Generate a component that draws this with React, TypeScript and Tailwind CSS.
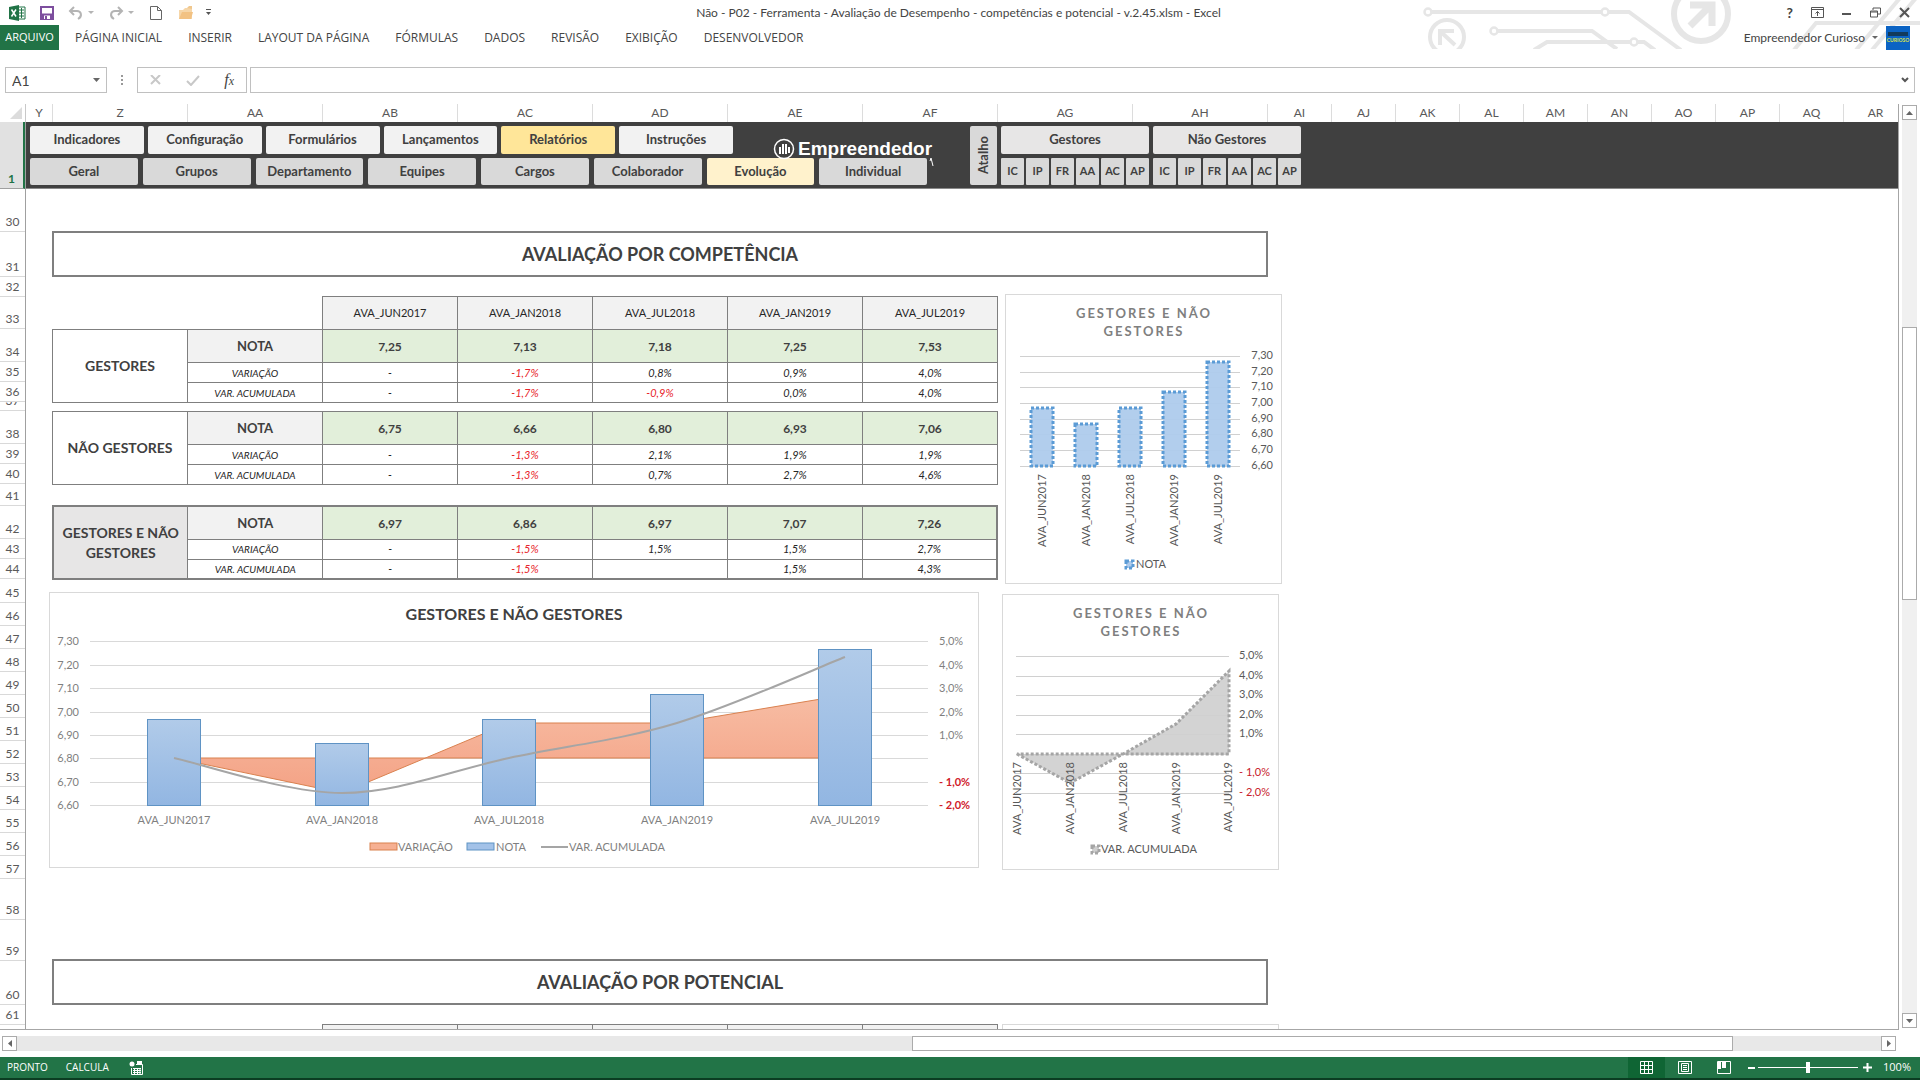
import React from "react";

const periods = ["AVA_JUN2017", "AVA_JAN2018", "AVA_JUL2018", "AVA_JAN2019", "AVA_JUL2019"];

const columns: [string, string][] = [
  ["Y", "w-[27px]"], ["Z", "w-[135px]"], ["AA", "w-[135px]"], ["AB", "w-[135px]"], ["AC", "w-[135px]"],
  ["AD", "w-[135px]"], ["AE", "w-[135px]"], ["AF", "w-[135px]"], ["AG", "w-[135px]"], ["AH", "w-[135px]"],
  ["AI", "w-[64px]"], ["AJ", "w-[64px]"], ["AK", "w-[64px]"], ["AL", "w-[64px]"], ["AM", "w-[64px]"],
  ["AN", "w-[64px]"], ["AO", "w-[64px]"], ["AP", "w-[64px]"], ["AQ", "w-[64px]"], ["AR", "w-[64px]"],
];

const rowHeaders: [number, string][] = [
  [30, "h-[43px]"], [31, "h-[45px]"], [32, "h-5"], [33, "h-8"], [34, "h-[33px]"], [35, "h-5"], [36, "h-5"],
  [37, "h-[9px]"], [38, "h-[33px]"], [39, "h-5"], [40, "h-5"], [41, "h-[22px]"], [42, "h-[33px]"], [43, "h-5"],
  [44, "h-5"], [45, "h-6"], [46, "h-[23px]"], [47, "h-[23px]"], [48, "h-[23px]"], [49, "h-[23px]"],
  [50, "h-[23px]"], [51, "h-[23px]"], [52, "h-[23px]"], [53, "h-[23px]"], [54, "h-[23px]"], [55, "h-[23px]"],
  [56, "h-[23px]"], [57, "h-[23px]"], [58, "h-[41px]"], [59, "h-[41px]"], [60, "h-11"], [61, "h-5"],
];

const tabs = ["PÁGINA INICIAL", "INSERIR", "LAYOUT DA PÁGINA", "FÓRMULAS", "DADOS", "REVISÃO", "EXIBIÇÃO", "DESENVOLVEDOR"];

function Circuit() {
  return (
    <svg className="pointer-events-none absolute top-0 right-0" width="500" height="49" viewBox="1420 0 500 49" fill="none" stroke="#e6e6e6" strokeWidth="4" aria-hidden="true">
      <circle cx="1428" cy="12" r="3.5" strokeWidth="2.5" />
      <path d="M1432 12H1601M1609 12H1629L1681 50" />
      <circle cx="1605" cy="12" r="3.5" strokeWidth="2.5" />
      <circle cx="1494" cy="31" r="3.5" strokeWidth="2.5" />
      <path d="M1498 31H1592L1617 49M1534 50L1547 42H1630M1638 42H1644L1655 50" />
      <circle cx="1634" cy="42" r="3.5" strokeWidth="2.5" />
      <circle cx="1447" cy="37" r="17" />
      <path d="M1440 45V31H1454M1441 32L1455 45" />
      <circle cx="1701" cy="14" r="27" strokeWidth="6" />
      <path d="M1690 26L1711 5M1690 5H1712V26" strokeWidth="7" />
      <path d="M1794 50L1816 23H1920M1856 50L1900 -2M1872 50L1916 -2" />
    </svg>
  );
}

function TitleBar() {
  return (
    <header className="grid h-[25px] shrink-0 grid-cols-[1fr_auto_1fr] items-center text-[12px] text-[#444]">
      <div className="flex items-center pl-[9px]">
        <svg width="17" height="16" viewBox="0 0 17 16" aria-hidden="true">
          <path d="M9 2h7v12H9z" fill="#fff" stroke="#217346" />
          <path d="M10 5h5M10 8h5M10 11h5M12.500 3v10" stroke="#217346" />
          <path d="M0 2L10 0v16L0 14z" fill="#217346" />
          <path d="M2.500 4.500L7 11.500M7 4.500L2.500 11.500" stroke="#fff" strokeWidth="1.500" />
        </svg>
        <button aria-label="Salvar" className="ml-[14px]">
          <svg width="14" height="14" viewBox="0 0 14 14"><path d="M1 1h12v12H1z" fill="#fff" stroke="#7d4e9e" strokeWidth="2" /><path d="M1 7.500h12V13H1z" fill="#7d4e9e" /><path d="M4 9.500h6V13H4z" fill="#fff" /><path d="M5 10h2v3H5z" fill="#7d4e9e" /></svg>
        </button>
        <button aria-label="Desfazer" className="ml-[14px] flex items-center gap-1">
          <svg width="16" height="14" viewBox="0 0 16 14" fill="none" stroke="#b4b4b4" strokeWidth="2"><path d="M6 1L2 5l4 4M2 5h7c4 0 6 5 1 8" /></svg>
          <svg width="6" height="3"><path d="M0 0h6L3 3z" fill="#b4b4b4" /></svg>
        </button>
        <button aria-label="Refazer" className="ml-[14px] flex items-center gap-1">
          <svg width="16" height="14" viewBox="0 0 16 14" fill="none" stroke="#b4b4b4" strokeWidth="2"><path d="M10 1l4 4-4 4M14 5H7C3 5 1 10 6 13" /></svg>
          <svg width="6" height="3"><path d="M0 0h6L3 3z" fill="#b4b4b4" /></svg>
        </button>
        <button aria-label="Novo" className="ml-4">
          <svg width="12" height="14" viewBox="0 0 12 14" fill="#fff" stroke="#666"><path d="M.500.500h7l4 4v9h-11zM7.500.500v4h4" /></svg>
        </button>
        <button aria-label="Abrir" className="ml-4">
          <svg width="16" height="14" viewBox="0 0 16 14"><path d="M1 13V4h4l2-2h7v11z" fill="#f6d6a8" /><path d="M9 2l2-2h3v3" fill="#f0c78d" /><path d="M1 13l3-7h11l-2 7z" fill="#f2c283" /></svg>
        </button>
        <button aria-label="Personalizar" className="ml-[12px]">
          <svg width="5" height="7"><path d="M0 .500h5" stroke="#555" /><path d="M0 3h5L2.500 6z" fill="#555" /></svg>
        </button>
      </div>
      <h1 className="whitespace-nowrap pr-[3px]">Não - P02 - Ferramenta - Avaliação de Desempenho - competências e potencial - v.2.45.xlsm - Excel</h1>
      <div className="flex items-center justify-end gap-[18px] pr-[10px]">
        <button aria-label="Ajuda" className="text-[14px] font-bold leading-4">?</button>
        <button aria-label="Opções da faixa"><svg width="13" height="11" fill="none" stroke="#555"><path d="M.500.500h12v10H.500zM.500 2.500h12M6.500 9V4.500M4.500 6.500l2-2 2 2" /></svg></button>
        <button aria-label="Minimizar"><svg width="10" height="11"><path d="M0 7h9" stroke="#555" strokeWidth="2" /></svg></button>
        <button aria-label="Restaurar"><svg width="11" height="11" fill="none" stroke="#555"><path d="M3 3V1h7.500v6H8M.500 4h7v6h-7zM.500 5h7" /></svg></button>
        <button aria-label="Fechar"><svg width="11" height="11" stroke="#555" strokeWidth="2"><path d="M1 1l9 9M10 1l-9 9" /></svg></button>
      </div>
    </header>
  );
}

function Ribbon() {
  return (
    <nav className="flex h-[25px] shrink-0 items-center font-['Open_Sans',sans-serif] text-[12px] text-[#444]">
      <button className="h-full w-[59px] bg-[#217346] text-[11px] text-white">ARQUIVO</button>
      <div className="flex gap-[26px] pl-4">
        {tabs.map((t) => <button key={t} className="whitespace-nowrap">{t}</button>)}
      </div>
      <div className="ml-auto flex items-center pr-[10px] font-[Lato,sans-serif] text-[12px]">
        <button className="flex items-center gap-[7px] whitespace-nowrap">
          Empreendedor Curioso
          <svg width="6" height="3"><path d="M0 0h6L3 3z" fill="#666" /></svg>
        </button>
        <span className="ml-2 flex h-6 w-6 flex-col items-center justify-center bg-[#0b63c4]">
          <span className="h-1 w-5 bg-[#123a5c]" />
          <span className="text-[5px] font-bold leading-2 text-[#d6e04a]">CURIOSO</span>
        </span>
      </div>
    </nav>
  );
}

function FormulaBar() {
  return (
    <div className="mt-[17px] flex h-[26px] shrink-0 items-stretch pr-[5px] pl-[5px] text-[13px] text-[#444]">
      <div className="flex w-[102px] items-center border border-[#c0c0c0] pr-[6px]">
        <input aria-label="Caixa de nome" defaultValue="A1" className="w-full min-w-0 flex-1 pl-[6px] text-[14px] outline-none" />
        <svg width="7" height="4"><path d="M0 0h7L3.500 4z" fill="#666" /></svg>
      </div>
      <div className="flex w-[30px] items-center justify-center">
        <svg width="2" height="11" fill="#999"><path d="M0 0h2v2H0zM0 4h2v2H0zM0 8h2v2H0z" /></svg>
      </div>
      <div className="flex w-[110px] items-center justify-between border border-[#c0c0c0] pr-3 pl-3">
        <button aria-label="Cancelar"><svg width="11" height="10" stroke="#c8c8c8" strokeWidth="2"><path d="M1 0l9 9M10 0L1 9" /></svg></button>
        <button aria-label="Inserir"><svg width="14" height="11" fill="none" stroke="#c8c8c8" strokeWidth="2"><path d="M1 6l4 4 8-9" /></svg></button>
        <button aria-label="Inserir função" className="font-['Liberation_Serif',serif] text-[16px] leading-4 italic">f<span className="text-[12px]">x</span></button>
      </div>
      <div className="ml-[3px] flex flex-1 items-center border border-[#c0c0c0] pr-[5px]">
        <input aria-label="Barra de fórmulas" className="min-w-0 flex-1 px-2 outline-none" />
        <svg width="8" height="6" fill="none" stroke="#555" strokeWidth="2"><path d="M1 1l3 3 3-3" /></svg>
      </div>
    </div>
  );
}

const mainMenu = ["Indicadores", "Configuração", "Formulários", "Lançamentos", "Relatórios", "Instruções"];
const subMenu = ["Geral", "Grupos", "Departamento", "Equipes", "Cargos", "Colaborador", "Evolução", "Individual"];
const shortcuts = ["IC", "IP", "FR", "AA", "AC", "AP"];

function ShortcutGroup({ label }: { label: string }) {
  return (
    <div className="flex w-[148px] flex-col gap-1">
      <button className="h-7 rounded-[2px] bg-[#e7e6e6]">{label}</button>
      <div className="grid h-[27px] grid-cols-6 gap-[2px] text-[11px]">
        {shortcuts.map((s) => <button key={s} className="rounded-[1px] bg-[#d9d9d9]">{s}</button>)}
      </div>
    </div>
  );
}

function MenuBand() {
  return (
    <div className="relative flex h-[67px] shrink-0 border-b border-[#8a8a8a] bg-[#404040] pt-1 pb-[3px] pl-1 text-[13px] font-bold text-[#404040]">
      <div className="flex w-[897px] flex-col gap-1">
        <div className="grid h-7 w-[703px] grid-cols-6 gap-1">
          {mainMenu.map((m) => (
            <button key={m} className={m === "Relatórios" ? "rounded-[2px] bg-[#ffe699]" : "rounded-[2px] bg-[#f2f2f2]"}>{m}</button>
          ))}
        </div>
        <div className="grid h-7 grid-cols-8 gap-[5px]">
          {subMenu.map((m) => (
            <button key={m} className={m === "Evolução" ? "rounded-[2px] bg-[#fff2cc]" : "rounded-[2px] bg-[#d9d9d9]"}>{m}</button>
          ))}
        </div>
      </div>
      <div className="absolute top-[16px] left-[747px] flex items-center gap-[3px] text-white">
        <svg width="22" height="22" viewBox="0 0 22 22" aria-hidden="true">
          <circle cx="11" cy="11" r="9.500" fill="#404040" stroke="#fff" strokeWidth="1.500" />
          <path d="M7 9v7M10 6v10M13 6v10M16 9v6" stroke="#fff" strokeWidth="2" />
        </svg>
        <span className="font-['Liberation_Sans',sans-serif] text-[19px] leading-[22px] font-bold">Empreendedor</span>
        <svg className="absolute top-[20px] right-[-2px]" width="5" height="8" fill="none" stroke="#fff" aria-hidden="true"><path d="M1 3L2 0l2 8" /></svg>
      </div>
      <div className="ml-[43px] flex gap-1">
        <button className="flex w-[27px] items-center justify-center rounded-[2px] bg-[#d9d9d9]">
          <span className="rotate-180 [writing-mode:vertical-rl]">Atalho</span>
        </button>
        <ShortcutGroup label="Gestores" />
        <ShortcutGroup label="Não Gestores" />
      </div>
    </div>
  );
}

type Group = { title: string; nota: string[]; variacao: string[]; acumulada: string[] };

const groups: Group[] = [
  { title: "GESTORES", nota: ["7,25", "7,13", "7,18", "7,25", "7,53"], variacao: ["-", "-1,7%", "0,8%", "0,9%", "4,0%"], acumulada: ["-", "-1,7%", "-0,9%", "0,0%", "4,0%"] },
  { title: "NÃO GESTORES", nota: ["6,75", "6,66", "6,80", "6,93", "7,06"], variacao: ["-", "-1,3%", "2,1%", "1,9%", "1,9%"], acumulada: ["-", "-1,3%", "0,7%", "2,7%", "4,6%"] },
  { title: "GESTORES E NÃO GESTORES", nota: ["6,97", "6,86", "6,97", "7,07", "7,26"], variacao: ["-", "-1,5%", "1,5%", "1,5%", "2,7%"], acumulada: ["-", "-1,5%", "", "1,5%", "4,3%"] },
];

function DetailRow({ label, values }: { label: string; values: string[] }) {
  return (
    <tr className="h-5 text-[11px] leading-4 italic text-[#262626]">
      <th scope="row" className="border border-[#7f7f7f] p-0 text-[10px] font-normal">{label}</th>
      {values.map((v, i) => (
        <td key={i} className={v.length > 1 && v[0] === "-" ? "border border-[#7f7f7f] p-0 text-[#e8252b]" : "border border-[#7f7f7f] p-0"}>{v}</td>
      ))}
    </tr>
  );
}

function GroupTable({ group, header, total }: { group: Group; header?: boolean; total?: boolean }) {
  return (
    <table className={total ? "w-[946px] table-fixed border-collapse border-2 border-[#7f7f7f] text-center" : "w-[946px] table-fixed border-collapse text-center"}>
      {header && (
        <thead>
          <tr className="h-[33px] text-[11px] text-[#262626]">
            <td className="p-0" />
            <td className="p-0" />
            {periods.map((p) => <th key={p} scope="col" className="border border-[#7f7f7f] bg-[#f2f2f2] p-0 font-normal">{p}</th>)}
          </tr>
        </thead>
      )}
      <tbody>
        <tr className="h-[33px] text-[#404040]">
          <th rowSpan={3} scope="rowgroup" className={total ? "border border-[#7f7f7f] bg-[#e7e6e6] p-0 text-[14px] leading-5" : "border border-[#7f7f7f] p-0 text-[14px] leading-5"}>{group.title}</th>
          <th scope="row" className="border border-[#7f7f7f] bg-[#f2f2f2] p-0 pt-[2px] text-[13px]">NOTA</th>
          {group.nota.map((v, i) => <td key={i} className="border border-[#7f7f7f] bg-[#e2efda] p-0 pt-[2px] text-[12px] font-bold">{v}</td>)}
        </tr>
        <DetailRow label="VARIAÇÃO" values={group.variacao} />
        <DetailRow label="VAR. ACUMULADA" values={group.acumulada} />
      </tbody>
    </table>
  );
}

function EvolutionChart() {
  const centers = [125, 293, 460, 628, 796];
  const tops = [127, 151, 127, 102, 57];
  const left = ["7,30", "7,20", "7,10", "7,00", "6,90", "6,80", "6,70", "6,60"];
  const right = ["5,0%", "4,0%", "3,0%", "2,0%", "1,0%", "", "- 1,0%", "- 2,0%"];
  const ys = [49, 73, 96, 120, 143, 166, 190, 213];
  return (
    <svg width="930" height="276" viewBox="1 1 928 274" className="mt-3 -ml-[3px] block border border-[#d9d9d9] bg-white" fontSize="11" fill="#7f7f7f">
      <defs>
        <linearGradient id="bar" x1="0" y1="0" x2="0" y2="1"><stop offset="0" stopColor="#b1cbe9" /><stop offset="1" stopColor="#92b6e2" /></linearGradient>
        <linearGradient id="area" x1="0" y1="0" x2="0" y2="1"><stop offset="0" stopColor="#f7bda4" /><stop offset="1" stopColor="#f4a285" /></linearGradient>
      </defs>
      <text x="465" y="28" fontSize="16" fontWeight="bold" fill="#404040" textAnchor="middle">GESTORES E NÃO GESTORES</text>
      {ys.map((y, i) => (
        <g key={y}>
          <path d={`M41 ${y}.5H879`} stroke="#d9d9d9" />
          <text x="30" y={y + 4} textAnchor="end">{left[i]}</text>
          <text x="890" y={y + 4} fill={i > 5 ? "#d0202a" : "#7f7f7f"} fontWeight={i > 5 ? "bold" : "normal"}>{right[i]}</text>
        </g>
      ))}
      <path d="M125 166L293 201L460 131H628L796 103V166Z" fill="url(#area)" stroke="#d9814f" />
      {centers.map((c, i) => (
        <g key={c}>
          <rect x={c - 26.5} y={tops[i] + 0.5} width="53" height={213 - tops[i]} fill="url(#bar)" stroke="#5f93c4" />
          <text x={c} y="232" textAnchor="middle">{periods[i]}</text>
        </g>
      ))}
      <path d="M125 166C153 172 237 201 293 201C349 201 404 178 460 166C516 154 572 148 628 131C684 114 768 76 796 65" fill="none" stroke="#a5a5a5" strokeWidth="2" />
      <rect x="321" y="251" width="27" height="7" fill="#f6b092" stroke="#d9814f" />
      <text x="349" y="259">VARIAÇÃO</text>
      <rect x="418" y="251" width="27" height="7" fill="#a3c2e8" stroke="#5f93c4" />
      <text x="447" y="259">NOTA</text>
      <path d="M492 255H519" stroke="#a5a5a5" strokeWidth="2" />
      <text x="520" y="259">VAR. ACUMULADA</text>
    </svg>
  );
}

function SideTitle() {
  return (
    <g fontSize="13" fontWeight="bold" fill="#7f7f7f" textAnchor="middle" className="tracking-[2px]">
      <text x="139" y="24">GESTORES E NÃO</text>
      <text x="139" y="42">GESTORES</text>
    </g>
  );
}

function NotaChart() {
  const centers = [37, 81, 125, 169, 213];
  const tops = [114, 130, 114, 98, 68];
  const left = ["7,30", "7,20", "7,10", "7,00", "6,90", "6,80", "6,70", "6,60"];
  const ys = [62, 78, 93, 109, 125, 140, 156, 172];
  return (
    <svg width="277" height="290" viewBox="1 1 275 288" className="ml-[3px] block border border-[#d9d9d9] bg-white" fontSize="11" fill="#595959">
      <SideTitle />
      {ys.map((y, i) => (
        <g key={y}>
          <path d={`M15 ${y}.5H235`} stroke="#d0d0d0" />
          <text x="268" y={y + 3} textAnchor="end">{left[i]}</text>
        </g>
      ))}
      {centers.map((c, i) => (
        <g key={c}>
          <rect x={c - 11} y={tops[i]} width="22" height={172 - tops[i]} fill="#aecbec" fillOpacity="0.95" stroke="#5b9bd5" strokeWidth="3" strokeDasharray="3 2" />
          <text transform={`translate(${c + 4} 180) rotate(-90)`} textAnchor="end">{periods[i]}</text>
        </g>
      ))}
      <rect x="121" y="267" width="7" height="7" fill="#aecbec" stroke="#5b9bd5" strokeWidth="3" strokeDasharray="3 2" />
      <text x="131" y="274">NOTA</text>
    </svg>
  );
}

function AccumulatedChart() {
  const centers = [15, 68, 121, 174, 226];
  const labels = ["5,0%", "4,0%", "3,0%", "2,0%", "1,0%", "", "- 1,0%", "- 2,0%"];
  const ys = [62, 82, 101, 121, 140, 160, 179, 199];
  return (
    <svg width="277" height="276" viewBox="1 1 275 274" className="mt-[10px] block border border-[#d9d9d9] bg-white" fontSize="11" fill="#595959">
      <SideTitle />
      {ys.map((y, i) => (
        <g key={y}>
          <path d={`M14 ${y}.5H227`} stroke="#d0d0d0" />
          <text x="237" y={y + 3} fill={i > 5 ? "#c8202a" : "#595959"}>{labels[i]}</text>
        </g>
      ))}
      <path d="M15 160L68 189L121 160L174 130L227 77V160Z" fill="#cfcfcf" fillOpacity="0.92" stroke="#a5a5a5" strokeWidth="3" strokeDasharray="3 2" />
      {centers.map((c, i) => (
        <text key={c} transform={`translate(${c + 4} 168) rotate(-90)`} textAnchor="end">{periods[i]}</text>
      ))}
      <rect x="90" y="252" width="7" height="7" fill="#cfcfcf" stroke="#a5a5a5" strokeWidth="3" strokeDasharray="3 2" />
      <text x="99" y="259">VAR. ACUMULADA</text>
    </svg>
  );
}

function SectionTitle({ children }: { children: string }) {
  return <h2 className="flex h-[46px] w-[1216px] items-center justify-center border-2 border-[#7f7f7f] text-[18px] font-bold text-[#404040]">{children}</h2>;
}

function Sheet() {
  return (
    <div className="flex min-h-0 flex-1">
      <div className="w-[26px] shrink-0 overflow-hidden border-r border-[#a0a0a0] text-center text-[12px] leading-[18px] text-[#595959]">
        <div className="flex h-[67px] items-end justify-center border-r-2 border-b border-[#217346] border-b-[#a0a0a0] bg-[#e1e1e1] font-bold text-[#217346]">1</div>
        {rowHeaders.map(([n, h]) => (
          <div key={n} className={`${h} flex items-end justify-center overflow-hidden border-b border-[#d9d9d9]`}>{n}</div>
        ))}
      </div>
      <main className="flex min-w-0 flex-1 flex-col overflow-hidden">
        <MenuBand />
        <div className="min-h-0 flex-1 overflow-hidden pl-[26px]">
          <div className="mt-[42px]"><SectionTitle>AVALIAÇÃO POR COMPETÊNCIA</SectionTitle></div>
          <div className="mt-[17px] flex gap-1">
            <div className="w-[946px] shrink-0 pt-[2px]">
              <GroupTable group={groups[0]} header />
              <div className="mt-2"><GroupTable group={groups[1]} /></div>
              <div className="mt-5"><GroupTable group={groups[2]} total /></div>
              <EvolutionChart />
            </div>
            <div className="shrink-0">
              <NotaChart />
              <AccumulatedChart />
            </div>
          </div>
          <div className="mt-[89px]"><SectionTitle>AVALIAÇÃO POR POTENCIAL</SectionTitle></div>
          <div className="mt-[19px] flex h-8 gap-1">
            <div className="ml-[270px] grid w-[676px] grid-cols-5 border-t border-l border-[#7f7f7f] bg-[#f2f2f2]">
              {periods.map((p) => <div key={p} className="border-r border-[#7f7f7f]" />)}
            </div>
            <div className="w-[277px] border border-[#d9d9d9]" />
          </div>
        </div>
      </main>
    </div>
  );
}

function ColumnHeaders() {
  return (
    <div className="flex h-[18px] shrink-0 overflow-hidden text-[12px] leading-[18px] text-[#595959]">
      <div className="flex w-[26px] shrink-0 items-end justify-end border-r border-[#c8c8c8] pr-[3px] pb-[3px]">
        <svg width="12" height="12"><path d="M12 0v12H0z" fill="#dcdcdc" /></svg>
      </div>
      {columns.map(([c, w]) => <div key={c} className={`${w} shrink-0 border-r border-[#dcdcdc] text-center`}>{c}</div>)}
    </div>
  );
}

const scrollButton = "flex h-[15px] w-[15px] shrink-0 items-center justify-center border border-[#ababab] bg-white";

function StatusBar() {
  return (
    <footer className="flex h-[23px] shrink-0 items-center border-b-2 border-[#0b3d22] bg-[#227447] pl-[7px] font-['Open_Sans',sans-serif] text-[10px] text-white">
      <span>PRONTO</span>
      <span className="ml-[18px]">CALCULA</span>
      <svg className="ml-5" width="14" height="14" viewBox="0 0 14 14" fill="none" stroke="#fff" aria-hidden="true">
        <circle cx="3" cy="3" r="2.500" fill="#fff" stroke="none" />
        <path d="M7 3.500h6.500v10h-11V7M4 7.500h8M4 9.500h8M4 11.500h8M5.500 7v6M8.500 7v6M11 7v6" />
        <path d="M8 0h5v4H8z" fill="#fff" stroke="none" />
      </svg>
      <div className="ml-auto flex h-full items-center">
        <button aria-label="Normal" className="flex h-full w-[37px] items-center justify-center bg-[#0f6534]">
          <svg width="13" height="13" fill="none" stroke="#fff"><path d="M.500.500h12v12H.500zM4.500 0v13M8.500 0v13M0 4.500h13M0 8.500h13" /></svg>
        </button>
        <button aria-label="Layout da página" className="flex w-[40px] items-center justify-center">
          <svg width="14" height="13" fill="none" stroke="#fff"><path d="M.500.500h13v12H.500zM3.500 2.500h7v8h-7zM5 4.500h4M5 6.500h4M5 8.500h4" /></svg>
        </button>
        <button aria-label="Quebra de página" className="flex w-[37px] items-center justify-center">
          <svg width="14" height="13" fill="none" stroke="#fff"><path d="M.500.500h13v12H.500z" /><path d="M1 1h3v7H1zM5 1h4v6H5z" fill="#fff" stroke="none" /></svg>
        </button>
        <button aria-label="Reduzir" className="ml-[6px]"><svg width="7" height="9"><path d="M0 5h7" stroke="#fff" strokeWidth="2" /></svg></button>
        <input type="range" aria-label="Zoom" min="0" max="200" defaultValue="100" className="mx-[3px] h-[11px] w-[100px] appearance-none bg-[linear-gradient(#fff,#fff)] bg-[length:100%_1px] bg-center bg-no-repeat [&::-webkit-slider-thumb]:h-[11px] [&::-webkit-slider-thumb]:w-1 [&::-webkit-slider-thumb]:appearance-none [&::-webkit-slider-thumb]:bg-white" />
        <button aria-label="Ampliar" className="ml-[2px]"><svg width="9" height="9"><path d="M0 4.500h9M4.500 0v9" stroke="#fff" strokeWidth="2" /></svg></button>
        <span className="w-12 pr-[9px] text-right text-[11px]">100%</span>
      </div>
    </footer>
  );
}

export default function App() {
  return (
    <div className="relative flex h-screen flex-col overflow-hidden bg-white font-[Lato,sans-serif]">
      <Circuit />
      <div className="relative flex shrink-0 flex-col">
        <TitleBar />
        <Ribbon />
      </div>
      <FormulaBar />
      <div className="mt-[11px] flex min-h-0 flex-1">
        <div className="flex min-w-0 flex-1 flex-col border-r border-b border-[#a6a6a6]">
          <ColumnHeaders />
          <Sheet />
        </div>
        <div className="mt-[1px] mr-[3px] mb-[2px] ml-[3px] flex w-[15px] flex-col bg-[#f0f0f0]">
          <button aria-label="Rolar para cima" className={scrollButton}><svg width="7" height="4"><path d="M0 4h7L3.500 0z" fill="#666" /></svg></button>
          <div className="flex-[207]" />
          <div className="flex-[272] border border-[#ababab] bg-white" />
          <div className="flex-[414]" />
          <button aria-label="Rolar para baixo" className={scrollButton}><svg width="7" height="4"><path d="M0 0h7L3.500 4z" fill="#666" /></svg></button>
        </div>
      </div>
      <div className="mt-[6px] mr-6 mb-[6px] ml-[2px] flex h-[15px] shrink-0 bg-[#e8e8e8]">
        <button aria-label="Rolar para a esquerda" className={scrollButton}><svg width="4" height="7"><path d="M4 0v7L0 3.500z" fill="#666" /></svg></button>
        <div className="flex-[896]" />
        <div className="flex-[820] border border-[#ababab] bg-white" />
        <div className="flex-[148]" />
        <button aria-label="Rolar para a direita" className={scrollButton}><svg width="4" height="7"><path d="M0 0v7l4-3.500z" fill="#666" /></svg></button>
      </div>
      <StatusBar />
    </div>
  );
}
